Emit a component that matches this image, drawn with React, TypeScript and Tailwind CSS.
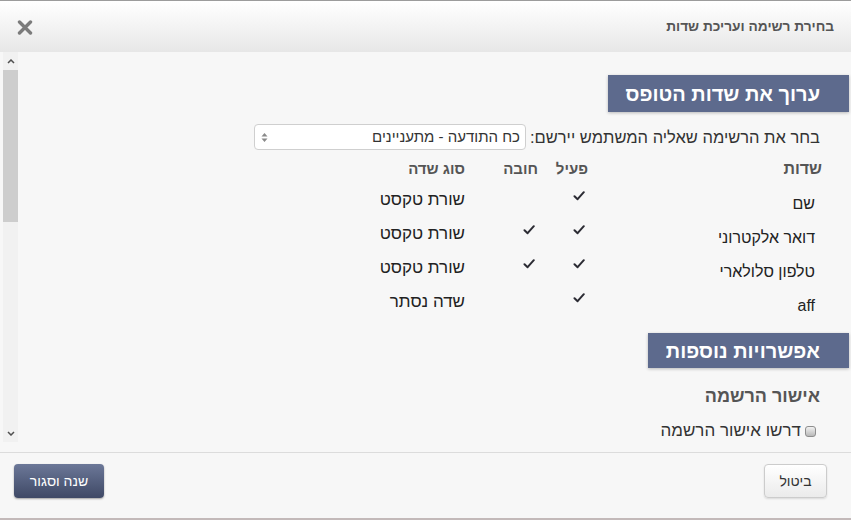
import React from "react";

const fields = [
  { name: "שם", active: true, required: false, type: "שורת טקסט" },
  { name: "דואר אלקטרוני", active: true, required: true, type: "שורת טקסט" },
  { name: "טלפון סלולארי", active: true, required: true, type: "שורת טקסט" },
  { name: "aff", active: true, required: false, type: "שדה נסתר" },
];

const Check = () => (
  <svg width="12" height="10" viewBox="0 0 12 10">
    <path d="M1.5 5.2 L4.6 8.2 L10.8 1.2" fill="none" stroke="#2b2b33" strokeWidth="2" strokeLinecap="round" strokeLinejoin="round" />
  </svg>
);

const SectionTitle = ({ children, width }: { children: React.ReactNode; width: string }) => (
  <div className={`${width} bg-[#5d6a8d] text-white font-bold text-[20px] flex items-center pr-[29px] shadow-[0_1px_3px_rgba(0,0,0,0.25)]`}>
    {children}
  </div>
);

export default function App() {
  return (
    <div
      dir="rtl"
      className="w-[851px] h-[520px] bg-[#f7f7f7] flex flex-col border-t border-[#9c9c9c] font-['Liberation_Sans',Arial,sans-serif] text-[#333]"
    >
      {/* header */}
      <div className="h-[51px] shrink-0 flex items-center justify-between pr-[17px] pl-[17px] bg-gradient-to-b from-white to-[#e7e7e7] border-t border-white">
        <span className="text-[13.7px] font-bold text-[#555]">בחירת רשימה ועריכת שדות</span>
        <svg width="16" height="15" viewBox="0 0 16 15">
          <path d="M2.5 2 L13.5 13 M13.5 2 L2.5 13" stroke="#7b7b7b" strokeWidth="3.4" strokeLinecap="round" />
        </svg>
      </div>

      {/* body */}
      <div className="h-[400px] shrink-0 flex overflow-hidden">
        <div className="flex-1 pr-[2px] flex flex-col">
          <div className="mt-[23px] h-[37px] flex">
            <SectionTitle width="w-[241px]">ערוך את שדות הטופס</SectionTitle>
          </div>

          <div className="mt-[12px] h-[26px] flex items-center pr-[29px] gap-[4px] text-[16.5px]">
            <span>בחר את הרשימה שאליה המשתמש יירשם:</span>
            <div className="w-[272px] h-[26px] bg-white border border-[#cfcfcf] rounded-[4px] flex items-center justify-between pr-[5px] pl-[6px] text-[15px] text-[#333]">
              <span>כח התודעה - מתעניינים</span>
              <svg width="7" height="11" viewBox="0 0 7 11">
                <path d="M3.5 1 L6.5 4.5 L0.5 4.5 Z M3.5 10 L6.5 6.5 L0.5 6.5 Z" fill="#8a8a8a" />
              </svg>
            </div>
          </div>

          <div className="mt-[5px] pr-[27px]">
            <div className="grid grid-cols-[234px_50px_73px_1fr] h-[28px] items-center text-[15px] font-bold text-[#555]">
              <span className="text-[16px]">שדות</span>
              <span>פעיל</span>
              <span>חובה</span>
              <span>סוג שדה</span>
            </div>
            {fields.map((f) => (
              <div key={f.name} className="grid grid-cols-[234px_50px_73px_1fr] h-[34px] items-center text-[17px] text-[#222]">
                <span className="pr-[7px] pt-[8px] text-[16px]">{f.name}</span>
                <span className="pr-[3px] pb-[8px] flex">{f.active && <Check />}</span>
                <span className="pr-[3px] pb-[8px] flex">{f.required && <Check />}</span>
                <span>{f.type}</span>
              </div>
            ))}
          </div>

          <div className="mt-[14px] h-[35px] flex">
            <SectionTitle width="w-[201px]">אפשרויות נוספות</SectionTitle>
          </div>

          <div className="mt-[18px] pr-[29px] leading-[20px] text-[18px] font-bold text-[#555]">אישור הרשמה</div>

          <div className="mt-[15px] h-[20px] flex items-center pr-[33px] gap-[4px] text-[17px]">
            <span className="w-[11px] h-[11px] rounded-[3px] border border-[#8e8e8e] bg-gradient-to-b from-[#f2f2f2] to-[#b9b9b9]" />
            <span>דרשו אישור הרשמה</span>
          </div>
        </div>

        {/* scrollbar */}
        <div className="w-[15px] ml-[3px] mb-[10px] bg-[#f1f1f1] flex flex-col items-center">
          <div className="h-[18px] flex items-center">
            <svg width="8" height="5" viewBox="0 0 8 5">
              <path d="M1 4 L4 1 L7 4" fill="none" stroke="#505050" strokeWidth="1.5" />
            </svg>
          </div>
          <div className="w-full h-[152px] bg-[#cdcdcd]" />
          <div className="flex-1" />
          <div className="h-[18px] flex items-center">
            <svg width="8" height="5" viewBox="0 0 8 5">
              <path d="M1 1 L4 4 L7 1" fill="none" stroke="#505050" strokeWidth="1.5" />
            </svg>
          </div>
        </div>
      </div>

      {/* footer */}
      <div className="flex-1 border-t border-[#dcdcdc] border-b-2 border-b-[#c3b9b9] flex items-start justify-between pt-[11px] pr-[24px] pl-[14px]">
        <button className="w-[63px] h-[34px] rounded-[4px] border border-[#cccccc] bg-gradient-to-b from-white to-[#ebebeb] text-[14px] text-[#333] shadow-[0_1px_2px_rgba(0,0,0,0.12)]">
          ביטול
        </button>
        <button className="w-[90px] h-[34px] rounded-[4px] bg-gradient-to-b from-[#6c7898] to-[#3f4966] text-[14px] text-white shadow-[0_1px_2px_rgba(0,0,0,0.35)]">
          שנה וסגור
        </button>
      </div>
    </div>
  );
}
